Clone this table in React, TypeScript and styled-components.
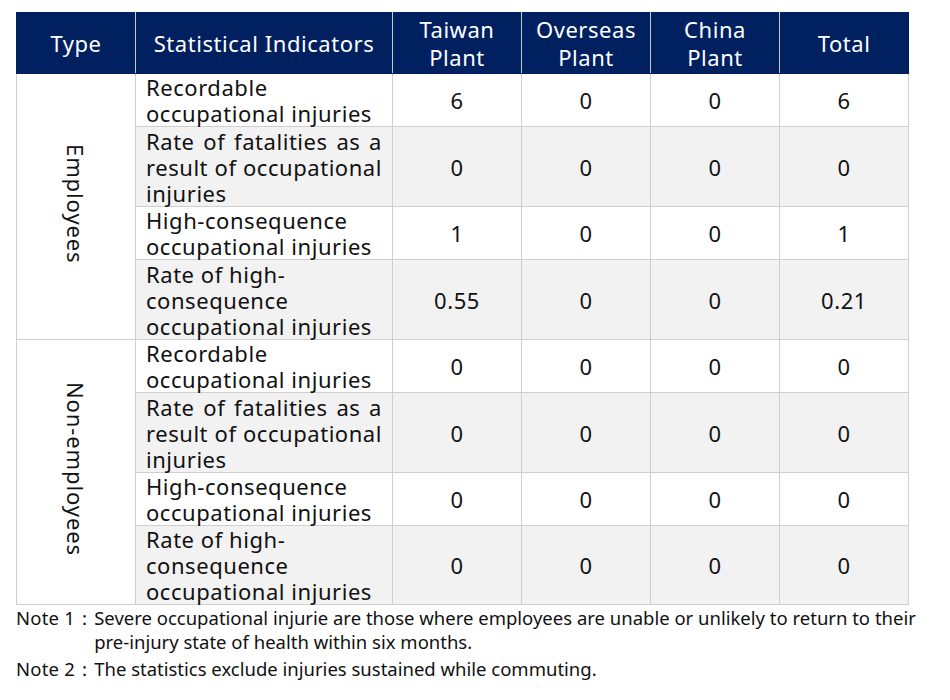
import React from "react";
import styled, { createGlobalStyle } from "styled-components";

const Global = createGlobalStyle`
  body { margin: 0; background: #fff; font-family: "Noto Sans", "Open Sans", sans-serif; }
`;

const Page = styled.div`
  padding: 12px 0 0 16px;
  width: 920px;
`;

const Table = styled.table`
  border-collapse: collapse;
  table-layout: fixed;
  width: 893px;
  font-size: 22px;
  letter-spacing: 0.55px;
  color: #111;
`;

const HeadCell = styled.th`
  background: #002060;
  color: #fff;
  font-weight: 400;
  height: 60px;
  padding: 0 2px;
  line-height: 28px;
  text-align: center;
  border: 1px solid #c8c8c8;
  border-top-color: #002060;
  border-bottom-color: #002060;
  &:first-child { border-left-color: #002060; }
  &:last-child { border-right-color: #002060; }
`;

const TypeCell = styled.td`
  background: #fff;
  border: 1px solid #cfcfcf;
  text-align: center;
  vertical-align: middle;
  padding: 0;
`;

const Vertical = styled.span`
  writing-mode: vertical-rl;
  display: inline-block;
  line-height: 26px;
  letter-spacing: 0.9px;
`;

const Row = styled.tr<{ $shade: boolean; $h: number }>`
  background: ${(p) => (p.$shade ? "#f2f2f2" : "#fff")};
  height: ${(p) => p.$h}px;
`;

const LabelCell = styled.td`
  border: 1px solid #cfcfcf;
  padding: 0 10px;
  line-height: 26px;
  text-align: justify;
  vertical-align: middle;
`;

const ValueCell = styled.td`
  border: 1px solid #cfcfcf;
  text-align: center;
  vertical-align: middle;
  padding: 0;
`;

const Notes = styled.div`
  margin-top: 1px;
  font-size: 18.5px;
  line-height: 24px;
  color: #111;
`;

const Note = styled.div`
  display: flex;
  & + & { margin-top: 3px; }
`;

const NoteLabel = styled.span`
  flex: 0 0 auto;
  white-space: pre;
  letter-spacing: 0.2px;
`;

const NoteText = styled.span`
  flex: 1;
`;

type R = { label: React.ReactNode; vals: string[]; h: number };

const rateHigh = (
  <>
    Rate of high-
    <br />
    consequence occupational injuries
  </>
);

const employees: R[] = [
  { label: "Recordable occupational injuries", vals: ["6", "0", "0", "6"], h: 53 },
  { label: "Rate of fatalities as a result of occupational injuries", vals: ["0", "0", "0", "0"], h: 80 },
  { label: "High-consequence occupational injuries", vals: ["1", "0", "0", "1"], h: 53 },
  { label: rateHigh, vals: ["0.55", "0", "0", "0.21"], h: 80 },
];

const nonEmployees: R[] = [
  { label: "Recordable occupational injuries", vals: ["0", "0", "0", "0"], h: 53 },
  { label: "Rate of fatalities as a result of occupational injuries", vals: ["0", "0", "0", "0"], h: 80 },
  { label: "High-consequence occupational injuries", vals: ["0", "0", "0", "0"], h: 53 },
  { label: rateHigh, vals: ["0", "0", "0", "0"], h: 79 },
];

function Group({ type, rows }: { type: string; rows: R[] }) {
  return (
    <>
      {rows.map((r, i) => (
        <Row key={i} $shade={i % 2 === 1} $h={r.h}>
          {i === 0 && (
            <TypeCell rowSpan={rows.length}>
              <Vertical>{type}</Vertical>
            </TypeCell>
          )}
          <LabelCell>{r.label}</LabelCell>
          {r.vals.map((v, j) => (
            <ValueCell key={j}>{v}</ValueCell>
          ))}
        </Row>
      ))}
    </>
  );
}

export default function App() {
  return (
    <Page>
      <Global />
      <Table>
        <colgroup>
          <col style={{ width: 119 }} />
          <col style={{ width: 257 }} />
          <col style={{ width: 129 }} />
          <col style={{ width: 129 }} />
          <col style={{ width: 129 }} />
          <col style={{ width: 129 }} />
        </colgroup>
        <thead>
          <tr>
            <HeadCell>Type</HeadCell>
            <HeadCell>Statistical Indicators</HeadCell>
            <HeadCell>Taiwan<br />Plant</HeadCell>
            <HeadCell>Overseas<br />Plant</HeadCell>
            <HeadCell>China<br />Plant</HeadCell>
            <HeadCell>Total</HeadCell>
          </tr>
        </thead>
        <tbody>
          <Group type="Employees" rows={employees} />
          <Group type="Non-employees" rows={nonEmployees} />
        </tbody>
      </Table>
      <Notes>
        <Note>
          <NoteLabel>Note 1：</NoteLabel>
          <NoteText>
            Severe occupational injurie are those where employees are unable or unlikely to return to their pre-injury state of health within six months.
          </NoteText>
        </Note>
        <Note>
          <NoteLabel>Note 2：</NoteLabel>
          <NoteText>The statistics exclude injuries sustained while commuting.</NoteText>
        </Note>
      </Notes>
    </Page>
  );
}
